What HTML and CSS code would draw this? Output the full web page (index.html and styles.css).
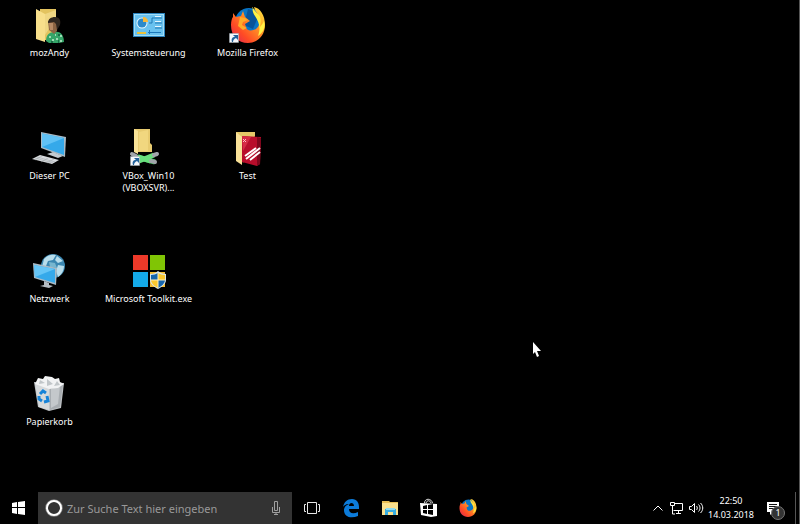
FILE: index.html
```html
<!DOCTYPE html>
<html lang="de">
<head>
<meta charset="utf-8">
<title>Desktop</title>
<link rel="stylesheet" href="styles.css">
</head>
<body>
<main class="desktop">
  <button class="shortcut" type="button">
    <svg class="icon" viewBox="0 0 40 40" aria-hidden="true">
      <path fill="#e3c35f" d="M10 4h16v31H10z"/><path fill="#f8df8b" d="M6 4l9 5v28l-9-3z"/><path fill="#fbeaa8" d="M15 9l11-4v8L15 30z" opacity=".5"/>
      <path fill="#35a568" d="M16 36c0-6 3-9 9-9 6-1 9 4 9 10l-5 1H19z"/><path fill="#9cdbb4" d="M19 31h2v2h-2zM22 34h2v2h-2zM26 33h2v2h-2zM30 30h2v2h-2zM30 35h2v2h-2zM25 29h1v2h-1z"/><path fill="#1b6b46" d="M21 36h2v2h-2zM28 35h1v3h-1zM28 29h2v2h-2z"/>
      <path fill="#8c6443" d="M18 16h9v10l-3 3-5-4z"/><path fill="#b98c66" d="M19 18h4v7h-3z"/><path fill="#30271f" d="M18 18c0-4 3-6 7-6 5 0 6 4 5 8l-3 5-1-6-2-2z"/>
    </svg>
    <span class="label">mozAndy</span>
  </button>
  <button class="shortcut" type="button">
    <svg class="icon" viewBox="0 0 40 40" aria-hidden="true">
      <path fill="#2b83bd" d="M4 8h32v24H4z"/><path fill="#9fdcf7" d="M5 9h30v22H5z"/><path fill="#69c2ef" d="M6 10h28v20H6z"/>
      <circle cx="13" cy="18" r="5.500" fill="#e8f8ff"/><circle cx="13" cy="18" r="4.500" fill="#2b8acb"/><path fill="#f6b93b" d="M14 17v-5c3 0 5 2 5 5z"/>
      <path fill="none" stroke="#1e78b5" d="M20 18h3v-5h3M26 13h7M26 18h7M26 23h7"/><path stroke="#e5f7ff" d="M26 11.500h6M26 16.500h6M26 21.500h6"/>
      <path stroke="#ecc23d" stroke-width="2" d="M8 28h9"/><path stroke="#1c77b9" d="M19 27.500h13M20.500 25v4"/>
    </svg>
    <span class="label">Systemsteuerung</span>
  </button>
  <button class="shortcut" type="button">
    <svg class="icon" viewBox="0 0 40 40" aria-hidden="true">
      <defs><linearGradient id="fire" x1="1" y1="0" x2="0" y2="1"><stop offset="0" stop-color="#fff347"/><stop offset=".35" stop-color="#ff9d25"/><stop offset=".7" stop-color="#ff4b25"/><stop offset="1" stop-color="#d9215b"/></linearGradient></defs>
      <circle cx="21" cy="17" r="14" fill="#0875c5"/><path fill="#075399" d="M20 4l6 2 4 6-5 12-9-4z"/>
      <path fill="url(#fire)" d="M5 8l3 4 5-1 2-5 2 6 5 4-5 3 1 3c0 4 7 5 11 1 4-4 3-11-2-18l-1-3c6 1 11 8 11 18 0 10-7 18-17 18S3 31 3 20C3 16 4 13 5 12z"/>
      <path fill="#fff044" d="M24 2c2 2 3 5 7 8 2 2 2 7 1 12l3-4 1-2c2 6-1 12-6 15 3-8 1-14-3-20-2-3-3-6-2-9z"/><path fill="#ffac29" d="M12 12l5 1 3 2-5 2-1 3 5 3-4 2-5-4z"/>
      <path fill="#f5f8fc" stroke="#a5aeb8" stroke-width=".5" d="M1.500 28.500h9v9h-9z"/><path fill="#23629b" d="M5 30h5v5l-2-2c-2 1-3 2-3 4H4c-1-3 0-5 3-5z"/>
    </svg>
    <span class="label">Mozilla Firefox</span>
  </button>

  <button class="shortcut" type="button">
    <svg class="icon" viewBox="0 0 40 40" aria-hidden="true">
      <path fill="#a9bac5" d="M11 4l25 5-1 20-24-9z"/><path fill="#35a9ea" d="M12 5.500L34 10v17L12 19z"/><path fill="#61c2f5" d="M12 5.500L34 10 12 19z"/>
      <path fill="#c4cbd0" d="M17 26l6-2 10 4-5 2z"/><path fill="#d7dadd" d="M2 31l8-4 19 5-7 4z"/><path stroke="#9da2a6" stroke-width=".5" d="M7 29l18 5M5 30l18 5M12 28l-7 4M18 30l-7 4M24 31l-7 4"/>
    </svg>
    <span class="label">Dieser PC</span>
  </button>
  <button class="shortcut" type="button">
    <svg class="icon" viewBox="0 0 40 40" aria-hidden="true">
      <path fill="#e8cb70" d="M5 1h16v14l2 2v7H9z"/><path fill="#f9e397" d="M5 1l4 2v23l-4-2z"/><path fill="#f1d77f" d="M10 4l9-2v21h-9z"/>
      <path stroke="#36bd55" stroke-width="5" d="M8 29l18 5"/><path stroke="#69df7d" stroke-width="5" d="M10 33l15-6M9 29l13 4"/><path stroke="#a1a5aa" stroke-width="4" stroke-linecap="round" d="M25 27l3-1M22 33l4 1M3 26l4 2"/>
      <path fill="#f5f8fc" stroke="#a5aeb8" stroke-width=".5" d="M1.500 28.500h9v9h-9z"/><path fill="#23629b" d="M5 30h5v5l-2-2c-2 1-3 2-3 4H4c-1-3 0-5 3-5z"/>
    </svg>
    <span class="label">VBox_Win10 (VBOXSVR)...</span>
  </button>
  <button class="shortcut" type="button">
    <svg class="icon" viewBox="0 0 40 40" aria-hidden="true">
      <path fill="#e5c768" d="M8 4h19v4L15 35z"/><path fill="#b80d2b" d="M14 8l19 1-1 27-3 2-15-4z"/><path fill="#7d071d" d="M29 9l4 1-1 26-3 2z"/><path fill="#d62b45" d="M14 8l9 1-8 14z"/>
      <path stroke="#fff" stroke-width="2" d="M17 28l11-8M18 31l14-11M22 32l10-8"/><path fill="none" stroke="#ffbdc8" d="M15 11l3 3m0-3l-3 3"/><path fill="#f9e198" d="M8 4l6 5v28l-6-4z"/>
    </svg>
    <span class="label">Test</span>
  </button>

  <button class="shortcut" type="button">
    <svg class="icon" viewBox="0 0 40 40" aria-hidden="true">
      <circle cx="23" cy="15" r="12" fill="#3b87b1"/><path fill="#b8ddeb" d="M14 8c3-4 8-5 12-4l-3 5-5 1-2 5-4 1zM27 5l6 5-5 2-3-3zM28 14l6 1c0 5-3 9-6 11l-2-6z"/><path fill="#77b6cf" d="M19 11l6 1 2 5-7-1z"/>
      <path fill="#a9bac5" d="M3 12l24 5-1 17-22-7z"/><path fill="#35a9ea" d="M4 14l21 4v14L5 26z"/><path fill="#65c5f6" d="M4 14l21 4L5 26z"/><path fill="#b5bdc3" d="M14 30l5 2v2l4 1-4 2-9-2 4-1z"/>
    </svg>
    <span class="label">Netzwerk</span>
  </button>
  <button class="shortcut" type="button">
    <svg class="icon" viewBox="0 0 40 40" aria-hidden="true">
      <path fill="#ed3929" d="M4 4h15v15H4z"/><path fill="#80c505" d="M21 4h15v15H21z"/><path fill="#14aae9" d="M4 21h15v15H4z"/><path fill="#f5bd32" d="M21 21h15v15H21z"/>
      <path fill="#d8e5ec" d="M21 23c4 0 6-1 8-3 2 2 5 3 8 3v6c0 4-4 7-8 9-4-2-8-5-8-9z"/><path fill="#1765ac" d="M22 24c3 0 5-1 7-2v7h-7zM29 29h7c0 3-3 6-7 8z"/><path fill="#fbc82e" d="M29 22c2 1 4 2 7 2v5h-7zM22 29h7v8c-4-2-7-5-7-8z"/><path stroke="#fff0ba" d="M29 22v15M22 29h14"/>
    </svg>
    <span class="label">Microsoft Toolkit.exe</span>
  </button>
  <span></span>

  <button class="shortcut" type="button">
    <svg class="icon" viewBox="0 0 40 40" aria-hidden="true">
      <path fill="#bfc3c6" d="M4 8l30 1-3 25-12 3-11-4z"/><path fill="#d6d9db" d="M5 9l14 3v24L9 33z"/><path fill="#a8adb1" d="M20 12l13-2-3 23-10 3z"/><path fill="#c4c8cb" d="M21 15l9-3-2 18-7 4z"/>
      <path fill="#f2f3f4" d="M5 10l3-6 5 1 2-3 7 1 3 2 4-1 1 4 4 2-6 4-9 1z"/><path fill="#c1c6c9" d="M10 6l5 3-6 1zM17 5l6 5-6 2zM27 7l3 4-6 1z"/>
      <path fill="none" stroke="#1683d8" stroke-width="3" d="M10 20l3-3 3 2M17 22l1 5-4 1M12 27l-3-2v-3"/>
    </svg>
    <span class="label">Papierkorb</span>
  </button>

  <svg class="cursor" viewBox="0 0 10 16" aria-hidden="true"><path fill="#fff" d="M1 0v12l2-2 2 5 2-1-2-5h4z"/></svg>
</main>

<footer class="taskbar">
  <button class="task start" type="button" aria-label="Start">
    <svg class="glyph" viewBox="0 0 20 20"><path fill="#fff" d="M3 5l5-1v5H3zM9 4l7-1v6H9zM3 10h5v6l-5-1zM9 10h7v7l-7-1z"/></svg>
  </button>
  <div class="search">
    <svg class="glyph" viewBox="0 0 20 20" aria-hidden="true"><circle cx="10" cy="10" r="7.500" fill="none" stroke="#858585" stroke-width="2.500"/><circle cx="10" cy="10" r="7" fill="none" stroke="#fff" stroke-width="2"/></svg>
    <input class="query" type="text" placeholder="Zur Suche Text hier eingeben" aria-label="Suche">
    <button class="mic" type="button" aria-label="Spracheingabe">
      <svg class="glyph" viewBox="0 0 20 20"><path fill="none" stroke="#a0a0a0" d="M8.500 3.500h3v9h-3zM6.500 9v5.500h7V9M10 15v2M8 16.500h4"/></svg>
    </button>
  </div>
  <button class="task" type="button" aria-label="Taskansicht">
    <svg class="glyph" viewBox="0 0 20 20"><path fill="none" stroke="#e8e8e8" d="M5.500 4.500h9v11h-9zM4 6.500H2.500v7H4M16 6.500h1.500v7H16"/></svg>
  </button>
  <button class="task" type="button" aria-label="Microsoft Edge">
    <svg class="glyph" viewBox="0 0 20 20"><path fill="#0c7bd9" d="M2 9C3 4 6 1 11 1c5 0 7 4 7 8v2H8c0 5 5 5 9 3v4c-7 3-14 1-14-6 0-3 2-5 5-6-4 0-5 2-6 3zm6-1h5c0-4-5-4-5 0z"/></svg>
  </button>
  <button class="task" type="button" aria-label="Explorer">
    <svg class="glyph" viewBox="0 0 20 20"><path fill="#e8bd53" d="M2 3h7l1 1h8v4H2z"/><path fill="#fbe18e" d="M2 5h16v12H2z"/><path fill="#39aee1" d="M5 11h11v6h-3v-3H8v3H5z"/><path fill="#91dcf1" d="M6 10h9v2H6z"/></svg>
  </button>
  <button class="task" type="button" aria-label="Store">
    <svg class="glyph" viewBox="0 0 20 20"><path fill="#fff" d="M1 5l17 1v12l-6 1-10-2z"/><path fill="none" stroke="#ddd" d="M5.500 5c0-5 7-5 8 0M7 5c1-3 4-3 5 0"/><path fill="#000" d="M4 8l4-1v4H4zM9 7l5-1v5H9zM4 12h4v4l-4-1zM9 12h5v5l-5-1z"/></svg>
  </button>
  <button class="task" type="button" aria-label="Firefox">
    <svg class="glyph" viewBox="0 0 40 40"><circle cx="21" cy="18" r="15" fill="#0875c5"/><path fill="url(#fire)" d="M5 8l3 4 5-1 2-5 2 6 5 4-5 3 1 3c0 4 7 5 11 1 4-4 3-11-2-18l-1-3c6 1 11 8 11 18 0 10-7 18-17 18S3 31 3 20C3 16 4 13 5 12z"/><path fill="#ffe23d" d="M24 2c2 2 3 5 7 8 2 2 2 7 1 12l3-4 1-2c2 6-1 12-6 15 3-8 1-14-3-20-2-3-3-6-2-9z"/></svg>
  </button>
  <div class="tray">
    <button class="status" type="button" aria-label="Ausgeblendete Symbole">
      <svg class="glyph" viewBox="0 0 20 20"><path fill="none" stroke="#fff" d="M5.500 12.500L10 8l4.500 4.500"/></svg>
    </button>
    <button class="status" type="button" aria-label="Netzwerkstatus">
      <svg class="glyph" viewBox="0 0 20 20"><path fill="none" stroke="#fff" d="M7.500 5.500h8v7H6.500M9 15.500h5M11.500 13v2.500M5.500 8v8H8M3.500 4.500h4v3h-4z"/></svg>
    </button>
    <button class="status" type="button" aria-label="Lautstärke">
      <svg class="glyph" viewBox="0 0 20 20"><path fill="none" stroke="#fff" d="M3.500 8.500h2l3-3v9l-3-3h-2zM10.500 8c1 1 1 3 0 4M12.500 6.500c2 2 2 5 0 7M14.500 5c3 3 3 7 0 10"/></svg>
    </button>
    <button class="clock" type="button"><span>22:50</span><span>14.03.2018</span></button>
    <button class="notify" type="button" aria-label="1 Benachrichtigung">
      <svg class="glyph" viewBox="0 0 20 20"><path fill="#fff" d="M4 4h12v10h-6l-3 3v-3H4z"/><path stroke="#111" d="M6 6.500h8M6 8.500h8M6 10.500h5"/></svg>
      <span class="badge">1</span>
    </button>
    <button class="peek" type="button" aria-label="Desktop anzeigen"></button>
  </div>
</footer>
</body>
</html>
```
FILE: styles.css
```css
* {
  box-sizing: border-box;
}

body {
  margin: 0;
  min-height: 100vh;
  display: flex;
  flex-direction: column;
  background: #000;
  color: #fff;
  border-right: 1px solid #555;
  font-family: "Noto Sans", "Open Sans", sans-serif;
  font-size: 9px;
}

button {
  padding: 0;
  border: 0;
  background: none;
  color: inherit;
  font: inherit;
}

.desktop {
  position: relative;
  flex: 1;
  display: grid;
  grid-template-columns: repeat(3, 99px);
  grid-template-rows: repeat(3, 123px) auto;
  padding-top: 5px;
}

.shortcut {
  display: flex;
  flex-direction: column;
  align-items: center;
}

.icon {
  width: 40px;
  height: 40px;
  flex: none;
}

.label {
  max-width: 96px;
  padding: 0 4px;
  margin-top: 2px;
  line-height: 12px;
}

.cursor {
  position: absolute;
  left: 532px;
  top: 342px;
  width: 10px;
  height: 16px;
}

.taskbar {
  display: flex;
  height: 32px;
}

.task {
  display: grid;
  place-items: center;
  width: 39px;
}

.start {
  width: 38px;
}

.glyph {
  display: block;
  width: 20px;
  height: 20px;
}

.search {
  display: flex;
  align-items: center;
  flex: 0 1 254px;
  min-width: 0;
  padding: 0 6px;
  background: #333;
}

.query {
  flex: 1;
  min-width: 0;
  padding: 0 3px;
  border: 0;
  outline: 0;
  background: none;
  color: #fff;
  font: inherit;
  font-size: 11px;
}

.query::placeholder {
  color: #999;
  opacity: 1;
}

.tray {
  display: flex;
  align-items: stretch;
  margin-left: auto;
}

.status {
  display: grid;
  place-items: center;
  width: 19px;
}

.clock {
  display: flex;
  flex-direction: column;
  justify-content: center;
  width: 52px;
  line-height: 14px;
  text-align: center;
}

.notify {
  position: relative;
  display: grid;
  place-items: center;
  width: 32px;
}

.badge {
  position: absolute;
  left: 14px;
  top: 14px;
  width: 14px;
  height: 14px;
  border: 1px solid #777;
  border-radius: 50%;
  background: #333;
  line-height: 12px;
}

.peek {
  width: 4px;
  margin-left: 6px;
  border-left: 1px solid #555;
}
```
